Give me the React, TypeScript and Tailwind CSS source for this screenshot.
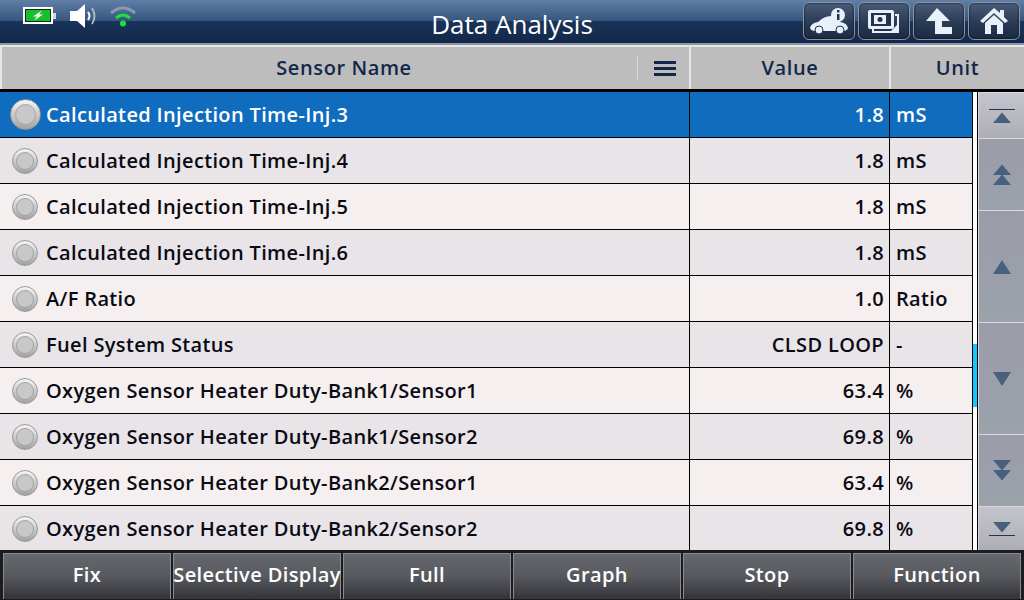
import React from 'react';

const rows = [
  { name: 'Calculated Injection Time-Inj.3', value: '1.8', unit: 'mS' },
  { name: 'Calculated Injection Time-Inj.4', value: '1.8', unit: 'mS' },
  { name: 'Calculated Injection Time-Inj.5', value: '1.8', unit: 'mS' },
  { name: 'Calculated Injection Time-Inj.6', value: '1.8', unit: 'mS' },
  { name: 'A/F Ratio', value: '1.0', unit: 'Ratio' },
  { name: 'Fuel System Status', value: 'CLSD LOOP', unit: '-' },
  { name: 'Oxygen Sensor Heater Duty-Bank1/Sensor1', value: '63.4', unit: '%' },
  { name: 'Oxygen Sensor Heater Duty-Bank1/Sensor2', value: '69.8', unit: '%' },
  { name: 'Oxygen Sensor Heater Duty-Bank2/Sensor1', value: '63.4', unit: '%' },
  { name: 'Oxygen Sensor Heater Duty-Bank2/Sensor2', value: '69.8', unit: '%' },
];

const footerButtons = ['Fix', 'Selective Display', 'Full', 'Graph', 'Stop', 'Function'];

const TopButton = ({ children }: { children: React.ReactNode }) => (
  <div className="w-[52px] h-[38px] rounded-[6px] border border-[#8a94a4] bg-gradient-to-b from-[#4a5c78] via-[#2c3d58] to-[#1b2a42] flex items-center justify-center shadow-[inset_0_0_2px_#000]">
    {children}
  </div>
);

const Radio = ({ big }: { big?: boolean }) => (
  <div
    className={`rounded-full border border-[#9a9a9a] bg-gradient-to-b from-[#f6f6f6] to-[#a2a2a2] flex items-center justify-center shrink-0 ${
      big ? 'w-[31px] h-[31px] ml-[10px] mr-[5px]' : 'w-[26px] h-[26px] ml-[12px] mr-[8px]'
    }`}
  >
    <div className={`rounded-full bg-[#c8c8c8] border border-[#a4a4a4] ${big ? 'w-[21px] h-[21px]' : 'w-[18px] h-[18px]'}`} />
  </div>
);

const Tri = ({ down, tall, className }: { down?: boolean; tall?: boolean; className?: string }) => (
  <svg width="20" height={tall ? 16 : 11} viewBox={tall ? '0 0 20 16' : '0 0 20 11'} className={className}>
    <polygon
      points={tall ? (down ? '1,1 19,1 10,15' : '10,1 19,15 1,15') : down ? '1,0 19,0 10,10.5' : '10,0.5 19,11 1,11'}
      fill="#46607e"
    />
  </svg>
);

const ScrollButton = ({ h, light, children }: { h: string; light?: boolean; children: React.ReactNode }) => (
  <div
    className={`${h} flex flex-col items-center justify-center border-t border-l border-[#d8d8de] ${
      light ? 'bg-gradient-to-b from-[#c4c4cc] to-[#aeaeb6]' : 'bg-gradient-to-b from-[#9c9ca8] to-[#9aa2aa]'
    }`}
  >
    {children}
  </div>
);

export default function App() {
  return (
    <div className="w-[1024px] h-[600px] overflow-hidden flex flex-col bg-white font-['Open_Sans',sans-serif]">
      {/* Title bar */}
      <div className="h-[45px] relative flex items-center justify-between border-b-2 border-[#8d96a6] bg-[linear-gradient(to_bottom,#5f7fa6_0%,#37567f_48%,#1a3358_50%,#12284a_100%)]">
        <div className="flex items-center pl-[23px] pb-[19px] pt-[8px] h-full">
          <svg width="34" height="20" viewBox="0 0 34 20" className="mr-[12px]">
            <rect x="1" y="2" width="28" height="15" fill="#0b2a12" stroke="#fff" strokeWidth="2" />
            <rect x="3" y="4" width="24" height="11" fill="#16c02c" />
            <rect x="30" y="7" width="3" height="6" fill="#cfd6de" />
            <polygon points="19,4.5 10,10.5 14,10.5 11,14.5 20,8.5 16,8.5" fill="#fff" />
          </svg>
          <svg width="30" height="26" viewBox="0 0 30 26" className="mr-[10px]">
            <polygon points="1,8 8,8 16,1 16,25 8,18 1,18" fill="#fff" />
            <path d="M19 9 Q22 13 19 17" fill="none" stroke="#fff" strokeWidth="2" />
            <path d="M23 5 Q28 13 23 21" fill="none" stroke="#aab6c6" strokeWidth="2" />
          </svg>
          <svg width="28" height="24" viewBox="0 0 28 24">
            <path d="M2 9 Q14 -1 26 9" fill="none" stroke="#8a9ab0" strokeWidth="3" />
            <path d="M7 14 Q14 8 21 14" fill="none" stroke="#14e43c" strokeWidth="3" />
            <circle cx="14" cy="19.5" r="3" fill="#14e43c" />
          </svg>
        </div>
        <div className="absolute left-0 w-[1024px] top-[7px] text-center text-white text-[26px] leading-[34px]">Data Analysis</div>
        <div className="flex items-center gap-[3px] pr-[4px] pb-[2px]">
          <TopButton>
            <svg width="40" height="30" viewBox="0 0 40 30">
              <path d="M1 22 Q2 17 9 16 Q15 10 22 10 Q28 11 31 16 Q38 17 39 22 Q38 25 34 25 H6 Q2 25 1 22Z" fill="#e8f0fb" />
              <circle cx="10" cy="24" r="4" fill="#e8f0fb" stroke="#24344c" />
              <circle cx="31" cy="24" r="4" fill="#e8f0fb" stroke="#24344c" />
              <circle cx="29" cy="9" r="7" fill="#e8f0fb" />
              <rect x="28" y="8" width="2.5" height="6" fill="#24344c" />
              <rect x="28" y="4" width="2.5" height="2.5" fill="#24344c" />
            </svg>
          </TopButton>
          <TopButton>
            <svg width="34" height="28" viewBox="0 0 34 28">
              <path d="M6 22 V25 H31 V8 H28" fill="none" stroke="#e8f0fb" strokeWidth="2" />
              <rect x="1" y="3" width="26" height="19" rx="2" fill="#e8f0fb" />
              <rect x="4" y="6" width="20" height="13" fill="#24344c" />
              <rect x="7" y="8" width="12" height="9" fill="#e8f0fb" />
              <circle cx="13" cy="12.5" r="2.5" fill="#24344c" />
              <polygon points="32,16 32,24 24,24" fill="#e8f0fb" />
            </svg>
          </TopButton>
          <TopButton>
            <svg width="28" height="28" viewBox="0 0 28 28">
              <polygon points="12,1 25,14 17,14 17,20 27,20 27,27 10,27 10,14 1,14" fill="#e8f0fb" />
            </svg>
          </TopButton>
          <TopButton>
            <svg width="28" height="28" viewBox="0 0 28 28">
              <polygon points="14,1 20,6 20,3 24,3 24,10 28,14 25,16 14,6 3,16 0,14" fill="#e8f0fb" />
              <path d="M5 16 L14 8 L23 16 V27 H17 V18 H11 V27 H5Z" fill="#e8f0fb" />
            </svg>
          </TopButton>
        </div>
      </div>

      {/* Column header */}
      <div className="h-[47px] flex border-b-[3px] border-black bg-[#bdbdbd] text-[#12284a] text-[20px] font-semibold tracking-[0.6px]">
        <div className="w-[689px] flex items-center border-l-2 border-t-2 border-[#e6e6e6]">
          <div className="w-[635px] pl-[49px] text-center">Sensor Name</div>
          <div className="w-px h-[24px] bg-[#d8d8d8]" />
          <div className="ml-[16px] w-[22px] flex flex-col gap-[3px]">
            <div className="h-[3px] bg-[#12284a]" />
            <div className="h-[3px] bg-[#12284a]" />
            <div className="h-[3px] bg-[#12284a]" />
          </div>
        </div>
        <div className="w-[200px] flex items-center justify-center border-l-2 border-t-2 border-[#e6e6e6]">Value</div>
        <div className="flex-1 flex items-center justify-center border-l-2 border-t-2 border-[#e6e6e6]">Unit</div>
      </div>

      {/* Table with scroll rail */}
      <div className="h-[458px] flex">
        <div className="w-[973px] border-r border-black">
          {rows.map((row, i) => {
            const selected = i === 0;
            const bg = selected ? 'bg-[#106cbe] text-white' : i % 2 === 1 ? 'bg-[#e8e4e8] text-[#0a0a14]' : 'bg-[#f6efef] text-[#0a0a14]';
            return (
              <div key={row.name} className={`h-[46px] flex items-center border-b border-black text-[20px] font-semibold tracking-[0.35px] ${bg} last:border-b-0`}>
                <div className="w-[689px] flex items-center h-full">
                  <Radio big={selected} />
                  <span className="whitespace-nowrap">{row.name}</span>
                </div>
                <div className="w-[200px] h-full flex items-center justify-end pr-[5px] border-l border-black">{row.value}</div>
                <div className="flex-1 h-full flex items-center pl-[6px] border-l border-black">{row.unit}</div>
              </div>
            );
          })}
        </div>
        <div className="w-[5px] relative border-r border-black bg-white">
          <div className="absolute left-0 top-[252px] w-[4px] h-[63px] bg-[#1cc4ff]" />
        </div>
        <div className="flex-1 flex flex-col bg-white">
          <ScrollButton h="h-[46px]" light>
            <div className="w-[26px] h-[1px] bg-[#24344c] mb-[2px]" />
            <Tri />
          </ScrollButton>
          <ScrollButton h="h-[72px]">
            <Tri className="-mb-[1px]" />
            <Tri />
          </ScrollButton>
          <ScrollButton h="h-[112px]">
            <Tri tall />
          </ScrollButton>
          <ScrollButton h="h-[112px]">
            <Tri down tall />
          </ScrollButton>
          <ScrollButton h="h-[72px]">
            <Tri down className="-mb-[1px]" />
            <Tri down />
          </ScrollButton>
          <ScrollButton h="h-[44px]" light>
            <Tri down />
            <div className="w-[26px] h-[1px] bg-[#24344c] mt-[2px]" />
          </ScrollButton>
        </div>
      </div>

      {/* Function buttons */}
      <div className="h-[50px] bg-[#1c1c1c] flex gap-[2px] pl-[3px] pt-[3px] pb-[1px]">
        {footerButtons.map((label) => (
          <div
            key={label}
            className="w-[168px] pb-[3px] flex items-center justify-center whitespace-nowrap border-t border-l border-r border-[#8a8a90] bg-gradient-to-b from-[#66686f] via-[#57595f] to-[#333438] text-white text-[20px] font-semibold tracking-[0.4px]"
          >
            {label}
          </div>
        ))}
      </div>
    </div>
  );
}
